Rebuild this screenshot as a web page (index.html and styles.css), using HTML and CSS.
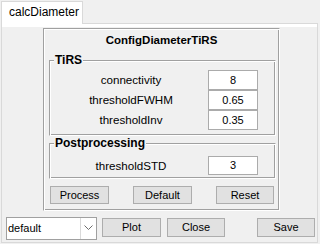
FILE: index.html
```html
<!DOCTYPE html>
<html>
<head>
<meta charset="utf-8">
<link rel="stylesheet" href="styles.css">
</head>
<body>
<div class="window">
  <div class="tabs">
    <div class="tab">calcDiameter</div>
    <div class="tab-fill"></div>
  </div>
  <div class="tabpanel">
    <div class="strip"></div>
    <div class="panel">
      <div class="title">ConfigDiameterTiRS</div>
      <div class="group tirs">
        <span class="group-title">TiRS</span>
        <div class="row"><span class="label">connectivity</span><span class="field">8</span></div>
        <div class="row"><span class="label">thresholdFWHM</span><span class="field">0.65</span></div>
        <div class="row"><span class="label">thresholdInv</span><span class="field">0.35</span></div>
      </div>
      <div class="group post">
        <span class="group-title">Postprocessing</span>
        <div class="row"><span class="label">thresholdSTD</span><span class="field short">3</span></div>
      </div>
      <div class="buttons">
        <span class="btn w59">Process</span>
        <span class="btn w59">Default</span>
        <span class="btn w58">Reset</span>
      </div>
    </div>
    <div class="bottom">
      <div class="select">
        <span class="select-text">default</span>
        <span class="select-arrow"><svg width="9" height="6" viewBox="0 0 9 6"><path d="M0.5 0.5 L4.5 4.5 L8.5 0.5" fill="none" stroke="#6d6d6d" stroke-width="1"/></svg></span>
      </div>
      <span class="btn bw59 plot">Plot</span>
      <span class="btn bw58 close">Close</span>
      <span class="btn bw58 save">Save</span>
    </div>
  </div>
</div>
</body>
</html>
```

FILE: styles.css
```css
* { box-sizing: border-box; }
html, body { margin: 0; padding: 0; }
body {
  background: #f0f0f0;
  width: 320px;
  height: 244px;
  overflow: hidden;
  font-family: "Liberation Sans", Arial, sans-serif;
  font-size: 11px;
  color: #000;
}
.tabs {
  display: flex;
  height: 24px;
  padding-left: 1px;
  width: 318px;
}
.tab {
  margin-top: 1px;
  width: 82px;
  height: 23px;
  background: #fff;
  border: 1px solid #d9d9d9;
  border-bottom: none;
  padding-left: 7px;
  font-size: 12px;
  line-height: 21px;
}
.tab-fill {
  flex: 1;
  border-bottom: 1px solid #d9d9d9;
}
.tabpanel {
  margin-left: 1px;
  width: 317px;
  height: 219px;
  border: 1px solid #d9d9d9;
  border-top: none;
}
.strip {
  height: 3px;
  background: #fff;
}
.panel {
  margin: 1px 0 0 41px;
  width: 237px;
  height: 183px;
  border: 1px solid;
  border-color: #a0a0a0 #fff #fff #a0a0a0;
  box-shadow: inset 1px 1px 0 #fff, inset -1px -1px 0 #a0a0a0;
  padding-top: 4px;
}
.title {
  font-weight: bold;
  font-size: 11.5px;
  line-height: 14px;
  text-align: center;
}
.group {
  position: relative;
  margin-left: 5px;
  width: 227px;
  border: 1px solid;
  border-color: #a0a0a0 #fff #fff #a0a0a0;
  box-shadow: inset 1px 1px 0 #fff, inset -1px -1px 0 #a0a0a0;
  padding-left: 4px;
}
.group-title {
  position: absolute;
  top: -8px;
  left: 4px;
  padding: 0 1px;
  background: #f0f0f0;
  font-weight: bold;
  font-size: 12px;
  line-height: 14px;
}
.tirs {
  margin-top: 13px;
  height: 76px;
  padding-top: 9px;
}
.post {
  margin-top: 7px;
  height: 36px;
  padding-top: 12px;
}
.row {
  display: grid;
  grid-template-columns: 154px 50px;
  align-items: center;
}
.label {
  text-align: center;
  font-size: 11.6px;
  line-height: 14px;
}
.field {
  height: 20px;
  background: #fff;
  border: 1px solid #ababab;
  text-align: center;
  line-height: 18px;
}
.field.short { height: 19px; line-height: 17px; }
.buttons {
  display: flex;
  gap: 24px;
  margin: 7px 0 0 6px;
}
.btn {
  display: block;
  height: 18px;
  background: #e1e1e1;
  border: 1px solid #adadad;
  text-align: center;
  line-height: 16px;
}
.w59 { width: 59px; }
.w58 { width: 58px; }
.bottom {
  display: flex;
  align-items: flex-start;
  margin-top: 6px;
  padding-left: 4px;
}
.select {
  display: flex;
  width: 91px;
  height: 23px;
  background: #fff;
  border: 1px solid #a0a0a0;
}
.select-text {
  flex: 1;
  padding-left: 1px;
  line-height: 21px;
  border-right: 1px solid #dadada;
}
.select-arrow {
  width: 15px;
  display: flex;
  align-items: center;
  justify-content: center;
  padding-bottom: 1px;
}
.bottom .btn {
  margin-top: 1px;
  height: 19px;
  line-height: 17px;
}
.bw59 { width: 59px; }
.bw58 { width: 58px; }
.plot { margin-left: 5px; }
.close { margin-left: 6px; }
.save { margin-left: 32px; }
```
